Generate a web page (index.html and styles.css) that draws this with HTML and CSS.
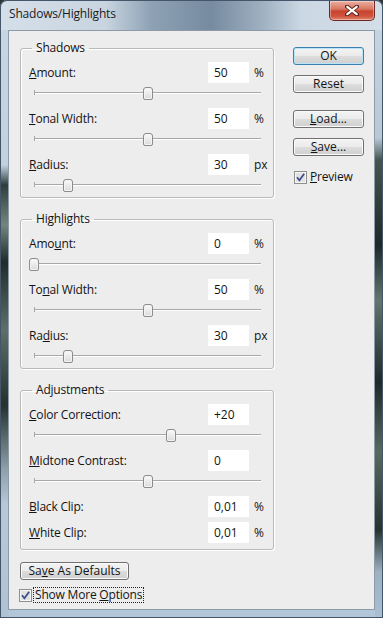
FILE: index.html
```html
<!DOCTYPE html>
<html lang="en">
<head>
  <meta charset="UTF-8">
  <title>Shadows/Highlights</title>
  <link rel="stylesheet" href="styles.css">
</head>
<body>

<div class="window">
  <div class="titlebar">
    <span class="title">Shadows/Highlights</span>
    <button class="close" aria-label="Close">
      <svg width="14" height="11" viewBox="0 0 14 11">
        <path d="M2 1.5 L12 9.5 M12 1.5 L2 9.5" stroke="#5a2018" stroke-width="4" stroke-linecap="round"/>
        <path d="M2.3 1.8 L11.7 9.2 M11.7 1.8 L2.3 9.2" stroke="#fff" stroke-width="2.2" stroke-linecap="round"/>
      </svg>
    </button>
  </div>

  <div class="client">
    <div class="main">
      <div class="groups">

        <fieldset class="group">
          <legend>Shadows</legend>
          <div class="control">
            <div class="field"><label><u>A</u>mount:</label><input type="text" value="50"><span class="unit">%</span></div>
            <div class="slider"><span class="thumb" style="left: 50%"></span></div>
          </div>
          <div class="control">
            <div class="field"><label><u>T</u>onal Width:</label><input type="text" value="50"><span class="unit">%</span></div>
            <div class="slider"><span class="thumb" style="left: 50%"></span></div>
          </div>
          <div class="control">
            <div class="field"><label><u>R</u>adius:</label><input type="text" value="30"><span class="unit">px</span></div>
            <div class="slider"><span class="thumb" style="left: 15%"></span></div>
          </div>
        </fieldset>

        <fieldset class="group">
          <legend>Highlights</legend>
          <div class="control">
            <div class="field"><label>Amo<u>u</u>nt:</label><input type="text" value="0"><span class="unit">%</span></div>
            <div class="slider"><span class="thumb" style="left: 0%"></span></div>
          </div>
          <div class="control">
            <div class="field"><label>To<u>n</u>al Width:</label><input type="text" value="50"><span class="unit">%</span></div>
            <div class="slider"><span class="thumb" style="left: 50%"></span></div>
          </div>
          <div class="control">
            <div class="field"><label>Ra<u>d</u>ius:</label><input type="text" value="30"><span class="unit">px</span></div>
            <div class="slider"><span class="thumb" style="left: 15%"></span></div>
          </div>
        </fieldset>

        <fieldset class="group adjust">
          <legend>Adjustments</legend>
          <div class="control">
            <div class="field"><label><u>C</u>olor Correction:</label><input type="text" value="+20"><span class="unit"></span></div>
            <div class="slider"><span class="thumb" style="left: 60.5%"></span></div>
          </div>
          <div class="control">
            <div class="field"><label><u>M</u>idtone Contrast:</label><input type="text" value="0"><span class="unit"></span></div>
            <div class="slider"><span class="thumb" style="left: 50%"></span></div>
          </div>
          <div class="field"><label><u>B</u>lack Clip:</label><input type="text" value="0,01"><span class="unit">%</span></div>
          <div class="field white"><label><u>W</u>hite Clip:</label><input type="text" value="0,01"><span class="unit">%</span></div>
        </fieldset>

      </div>

      <div class="actions">
        <button class="btn default">OK</button>
        <button class="btn reset">Reset</button>
        <button class="btn load"><u>L</u>oad...</button>
        <button class="btn save"><u>S</u>ave...</button>
        <label class="check preview">
          <svg class="box" width="13" height="13" viewBox="0 0 13 13">
            <rect x="0.5" y="0.5" width="12" height="12" fill="#f6f6f6" stroke="#8e8f8f"/>
            <rect x="2" y="2" width="9" height="9" fill="#e2e2e2"/>
            <path d="M3 6.3 L5.4 9.2 L10.2 2.8" stroke="#3e4f8c" stroke-width="1.8" fill="none"/>
          </svg>
          <span><u>P</u>review</span>
        </label>
      </div>
    </div>

    <div class="footer">
      <button class="btn wide">Sa<u>v</u>e As Defaults</button>
      <label class="check more">
        <svg class="box" width="13" height="13" viewBox="0 0 13 13">
          <rect x="0.5" y="0.5" width="12" height="12" fill="#f6f6f6" stroke="#8e8f8f"/>
          <rect x="2" y="2" width="9" height="9" fill="#e2e2e2"/>
          <path d="M3 6.3 L5.4 9.2 L10.2 2.8" stroke="#3e4f8c" stroke-width="1.8" fill="none"/>
        </svg>
        <span class="focus">Show More <u>O</u>ptions</span>
      </label>
    </div>
  </div>
</div>

</body>
</html>
```

FILE: styles.css
```css
* { box-sizing: border-box; }
body { margin: 0; background: #2b3634; font-family: "Open Sans", "Liberation Sans", sans-serif; font-size: 12px; letter-spacing: -0.2px; color: #141414; }

/* window frame */
.window {
  width: 383px; height: 618px;
  display: flex; flex-direction: column;
  border-radius: 7px 7px 0 0;
  overflow: hidden;
  box-shadow: inset 0 0 0 1px #44556a;
  background:
    linear-gradient(to bottom, #c9d6e3 0, #c3d1de 165px, #2f3e3c 185px, #74857f 225px, #1f2c2b 262px, #5d6f6a 330px, #24312e 405px, #8c9ea6 468px, #b7c8d8 505px, #afc2d5 618px) left top / 8px 100% no-repeat,
    linear-gradient(to bottom, #cad7e3 0, #b8c8d6 138px, #46554f 160px, #1c2928 245px, #62756f 300px, #1e2a29 382px, #58695f 452px, #26332e 530px, #9db1c3 572px, #aabfd3 618px) right top / 8px 100% no-repeat,
    linear-gradient(to bottom, #cfdae5, #b3c6d8);
}
.titlebar {
  height: 30px; flex-shrink: 0;
  display: flex; align-items: flex-start;
  padding-left: 8px;
  border-radius: 7px 7px 0 0;
  border: 1px solid #45566b; border-bottom: none;
  background: linear-gradient(to right, #d5dfe9 0, #c8d4e0 105px, #8ea2b5 150px, #768ba0 210px, #9fb1c2 262px, #cbd7e3 300px, #d3dee8 383px);
}
.title { margin-top: 5px; line-height: 16px; color: #1c1c1c; }
.close {
  margin-left: auto; margin-right: 7px;
  width: 46px; height: 20px;
  padding: 0; display: flex; align-items: center; justify-content: center;
  border: 1px solid #6a2a22; border-top: none;
  border-radius: 0 0 5px 5px;
  background: linear-gradient(to bottom, #eab0a2 0, #d97a66 40%, #c8432d 55%, #cf5440 80%, #e3866f 100%);
  box-shadow: inset 0 0 0 1px rgba(255,255,255,0.35);
}

/* client area */
.client {
  flex: 1;
  margin: 0 8px 8px;
  border: 1px solid #8d9aa7;
  background: #ededed;
  padding: 9px 0 0 11px;
}
.main { display: flex; gap: 19px; }
.groups { width: 254px; display: flex; flex-direction: column; gap: 13px; }

.group {
  margin: 0; min-width: 0;
  padding: 6px 0 1px 8px;
  border: 1px solid #b9b9b9; border-radius: 3px;
  box-shadow: 1px 1px 0 #fff, inset 1px 1px 0 #fff;
  display: flex; flex-direction: column; gap: 4px;
}
.group legend { margin-left: 3px; padding: 0 4px; line-height: 16px; }
.group.adjust { padding-bottom: 6px; }
.field.white { margin-top: 1px; }

.control { display: flex; flex-direction: column; }
.field { display: flex; align-items: center; height: 21px; }
.field label { flex: 1; }
.field input {
  width: 41px; height: 21px;
  border: none; background: #fff;
  font: inherit; color: #141414;
  padding: 0 0 0 6px;
}
.unit { width: 24px; padding-left: 5px; }

.slider { position: relative; height: 21px; margin: 0 12px 0 5px; }
.slider::before {
  content: ""; position: absolute; left: 0; right: 0; top: 9px;
  border-top: 1px solid #a8a8a8; border-bottom: 1px solid #fff;
}
.slider::after {
  content: ""; position: absolute; left: 0; top: 7px;
  width: 1px; height: 5px; background: #a8a8a8;
}
.thumb {
  position: absolute; top: 4px;
  width: 10px; height: 13px; margin-left: -5px;
  border: 1px solid #8c8c8c;
  border-radius: 3px 3px 2px 2px;
  background: linear-gradient(to bottom, #fbfbfb, #dadada);
  box-shadow: inset 0 0 0 1px #f4f4f4;
  z-index: 1;
}

/* buttons */
.actions { width: 71px; display: flex; flex-direction: column; padding-top: 7px; }
.btn {
  height: 18px; width: 71px; padding: 0;
  font: inherit; color: #141414; line-height: 16px;
  border: 1px solid #707070; border-radius: 3px;
  background: linear-gradient(to bottom, #f3f3f3 0, #ebebeb 50%, #dddddd 51%, #cfcfcf 100%);
  box-shadow: inset 0 0 0 1px #fbfbfb;
}
.btn.default { border-color: #3c7fb1; box-shadow: inset 0 0 0 1px #b9e4f7; }
.btn.reset { margin-top: 10px; }
.btn.load { margin-top: 17px; }
.btn.save { margin-top: 10px; }
.btn.wide { width: 109px; }

.check { display: flex; align-items: center; gap: 3px; line-height: 14px; }
.check .box { flex-shrink: 0; }
.preview { margin-top: 14px; margin-left: 1px; }

.footer { margin-top: 12px; display: flex; flex-direction: column; align-items: flex-start; }
.more { margin-top: 8px; margin-left: -1px; gap: 2px; }
.focus { outline: 1px dotted #222; padding: 0 1px; }
```
